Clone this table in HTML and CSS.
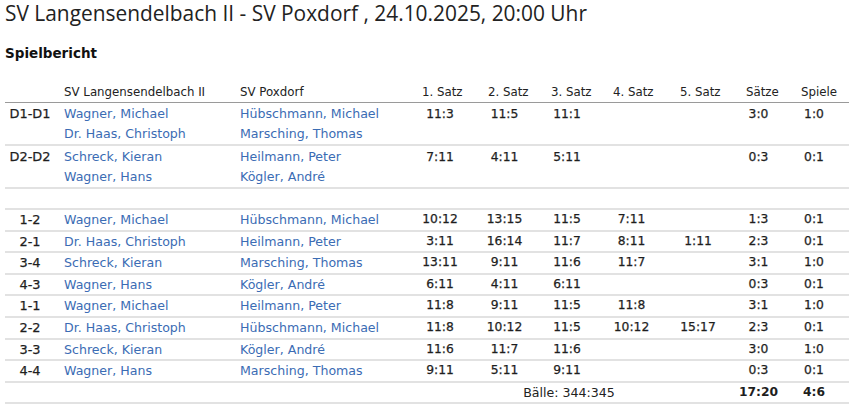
FILE: index.html
```html
<!DOCTYPE html>
<html lang="de">
<head>
<meta charset="utf-8">
<title>Spielbericht</title>
<link rel="stylesheet" href="styles.css">
</head>
<body>
<h1 class="title">SV Langensendelbach II - SV Poxdorf , 24.10.2025, 20:00 Uhr</h1>
<h2 class="subtitle">Spielbericht</h2>
<table class="report">
  <colgroup>
    <col class="c-label"><col class="c-team"><col class="c-team">
    <col class="c-s1"><col class="c-s2"><col class="c-s3"><col class="c-s4"><col class="c-s5">
    <col class="c-saetze"><col class="c-spiele">
  </colgroup>
  <thead>
    <tr>
      <th></th>
      <th class="name-h">SV Langensendelbach II</th>
      <th class="name-h">SV Poxdorf</th>
      <th>1. Satz</th><th>2. Satz</th><th>3. Satz</th><th>4. Satz</th><th>5. Satz</th>
      <th>Sätze</th><th>Spiele</th>
    </tr>
  </thead>
  <tbody>
    <tr class="double">
      <td class="label">D1-D1</td>
      <td class="name">Wagner, Michael<br>Dr. Haas, Christoph</td>
      <td class="name">Hübschmann, Michael<br>Marsching, Thomas</td>
      <td>11:3</td><td>11:5</td><td>11:1</td><td></td><td></td><td>3:0</td><td class="last">1:0</td>
    </tr>
    <tr class="double">
      <td class="label">D2-D2</td>
      <td class="name">Schreck, Kieran<br>Wagner, Hans</td>
      <td class="name">Heilmann, Peter<br>Kögler, André</td>
      <td>7:11</td><td>4:11</td><td>5:11</td><td></td><td></td><td>0:3</td><td class="last">0:1</td>
    </tr>
    <tr class="empty"><td colspan="10"></td></tr>
    <tr>
      <td class="label">1-2</td><td class="name">Wagner, Michael</td><td class="name">Hübschmann, Michael</td>
      <td>10:12</td><td>13:15</td><td>11:5</td><td>7:11</td><td></td><td>1:3</td><td class="last">0:1</td>
    </tr>
    <tr>
      <td class="label">2-1</td><td class="name">Dr. Haas, Christoph</td><td class="name">Heilmann, Peter</td>
      <td>3:11</td><td>16:14</td><td>11:7</td><td>8:11</td><td>1:11</td><td>2:3</td><td class="last">0:1</td>
    </tr>
    <tr>
      <td class="label">3-4</td><td class="name">Schreck, Kieran</td><td class="name">Marsching, Thomas</td>
      <td>13:11</td><td>9:11</td><td>11:6</td><td>11:7</td><td></td><td>3:1</td><td class="last">1:0</td>
    </tr>
    <tr>
      <td class="label">4-3</td><td class="name">Wagner, Hans</td><td class="name">Kögler, André</td>
      <td>6:11</td><td>4:11</td><td>6:11</td><td></td><td></td><td>0:3</td><td class="last">0:1</td>
    </tr>
    <tr>
      <td class="label">1-1</td><td class="name">Wagner, Michael</td><td class="name">Heilmann, Peter</td>
      <td>11:8</td><td>9:11</td><td>11:5</td><td>11:8</td><td></td><td>3:1</td><td class="last">1:0</td>
    </tr>
    <tr>
      <td class="label">2-2</td><td class="name">Dr. Haas, Christoph</td><td class="name">Hübschmann, Michael</td>
      <td>11:8</td><td>10:12</td><td>11:5</td><td>10:12</td><td>15:17</td><td>2:3</td><td class="last">0:1</td>
    </tr>
    <tr>
      <td class="label">3-3</td><td class="name">Schreck, Kieran</td><td class="name">Kögler, André</td>
      <td>11:6</td><td>11:7</td><td>11:6</td><td></td><td></td><td>3:0</td><td class="last">1:0</td>
    </tr>
    <tr>
      <td class="label">4-4</td><td class="name">Wagner, Hans</td><td class="name">Marsching, Thomas</td>
      <td>9:11</td><td>5:11</td><td>9:11</td><td></td><td></td><td>0:3</td><td class="last">0:1</td>
    </tr>
    <tr class="total">
      <td></td><td></td><td></td>
      <td colspan="5" class="balls">Bälle: 344:345</td>
      <td class="strong">17:20</td><td class="strong last">4:6</td>
    </tr>
  </tbody>
</table>
</body>
</html>
```

FILE: styles.css
```css
html, body {
  margin: 0;
  padding: 0;
  background: #ffffff;
}

body {
  font-family: "DejaVu Sans", Verdana, sans-serif;
  color: #222222;
}

.title {
  margin: 0;
  padding: 1px 5px 0;
  font-family: "Open Sans", "Noto Sans", sans-serif;
  font-weight: 400;
  font-size: 20.9px;
  line-height: 24px;
  color: #222222;
  white-space: nowrap;
}

.subtitle {
  margin: 19px 0 0;
  padding: 0 5px;
  font-size: 13.5px;
  line-height: 18px;
  font-weight: 700;
  color: #111111;
}

.report {
  margin: 19px 0 0 5px;
  border-collapse: collapse;
  table-layout: fixed;
  width: 843px;
  font-size: 12.3px;
}

.c-label { width: 50px; }
.c-team { width: 176px; }
.c-s1 { width: 66px; }
.c-s2 { width: 63px; }
.c-s3 { width: 62px; }
.c-s4 { width: 67px; }
.c-s5 { width: 66px; }
.c-saetze { width: 55px; }
.c-spiele { width: 63px; }

.report th {
  font-weight: 400;
  font-size: 11.8px;
  text-align: left;
  padding: 1px 0 0 15px;
  height: 20px;
  line-height: 20px;
  color: #222222;
  border-bottom: 1px solid #9a9a9a;
  white-space: nowrap;
}

.report th.name-h {
  padding-left: 9px;
}

.report td {
  text-align: center;
  vertical-align: top;
  padding: 0;
  height: 19.6px;
  line-height: 19.6px;
  border-bottom: 2px solid #e2e2e2;
  white-space: nowrap;
  color: #1e1e1e;
  -webkit-text-stroke: 0.25px #1e1e1e;
}

.report td.last {
  padding-right: 7px;
}

.report td.label {
  text-align: center;
  font-size: 12.9px;
}

.report td.name {
  text-align: left;
  padding-left: 9px;
  font-size: 12.6px;
  color: #3b6cb4;
  -webkit-text-stroke: 0;
}

.report tr.double td {
  padding-top: 1px;
  height: 40px;
  line-height: 20px;
}

.report tr.empty td {
  height: 19px;
}

.report td.balls {
  -webkit-text-stroke: 0;
  color: #222222;
  font-size: 12.6px;
}

.report td.strong {
  font-weight: 700;
  -webkit-text-stroke: 0;
}
```
